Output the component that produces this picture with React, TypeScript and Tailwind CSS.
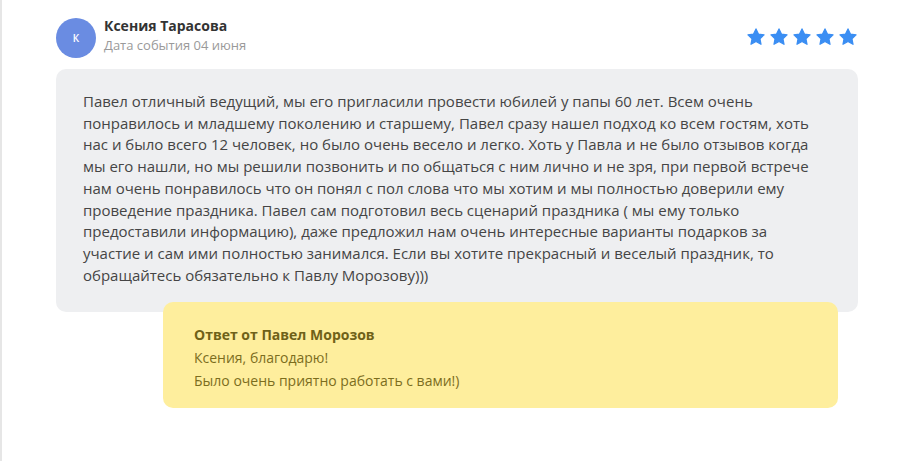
const reviewLines = [
  "Павел отличный ведущий, мы его пригласили провести юбилей у папы 60 лет. Всем очень",
  "понравилось и младшему поколению и старшему, Павел сразу нашел подход ко всем гостям, хоть",
  "нас и было всего 12 человек, но было очень весело и легко. Хоть у Павла и не было отзывов когда",
  "мы его нашли, но мы решили позвонить и по общаться с ним лично и не зря, при первой встрече",
  "нам очень понравилось что он понял с пол слова что мы хотим и мы полностью доверили ему",
  "проведение праздника. Павел сам подготовил весь сценарий праздника ( мы ему только",
  "предоставили информацию), даже предложил нам очень интересные варианты подарков за",
  "участие и сам ими полностью занимался. Если вы хотите прекрасный и веселый праздник, то",
  "обращайтесь обязательно к Павлу Морозову)))",
];

function Star() {
  return (
    <svg width="20" height="18" viewBox="0 0 24 23">
      <path
        d="M12 1.2l3.1 6.6 7.2.9-5.3 5 1.4 7.1L12 17.3l-6.4 3.5 1.4-7.1-5.3-5 7.2-.9z"
        fill="#3b8ef3"
        stroke="#3b8ef3"
        strokeWidth="1.6"
        strokeLinejoin="round"
      />
    </svg>
  );
}

export default function App() {
  return (
    <div className="w-[900px] h-[461px] bg-white border-l-2 border-[#e6e6e6] font-['Open_Sans',sans-serif] overflow-hidden">
      <div className="pl-[54px] pr-[42px] pt-[18px]">
        {/* Header */}
        <div className="flex items-start justify-between">
          <div className="flex items-center gap-[8px]">
            <div className="w-10 h-10 rounded-full bg-[#6a8ce2] flex items-center justify-center text-white text-[10px] font-semibold">
              К
            </div>
            <div className="flex flex-col -mt-[6px]">
              <span className="text-[14px] font-bold text-[#333] leading-[20px]">Ксения Тарасова</span>
              <span className="text-[13px] text-[#9a9a9a] leading-[19px]">Дата события 04 июня</span>
            </div>
          </div>
          <div className="flex gap-[3px] mt-[10px]">
            <Star />
            <Star />
            <Star />
            <Star />
            <Star />
          </div>
        </div>

        {/* Review */}
        <div className="mt-[11px] bg-[#eeeff1] rounded-[10px] pl-[27px] pr-[20px] pt-[22px] pb-[26px]">
          <p className="text-[15px] leading-[21.7px] text-[#454545]">
            {reviewLines.map((l) => (
              <span key={l} className="block whitespace-nowrap">
                {l}
              </span>
            ))}
          </p>
        </div>

        {/* Answer */}
        <div className="ml-[107px] mr-[20px] -mt-[10px] relative bg-[#feee9d] rounded-[10px] pl-[31px] pr-6 pt-[21px] pb-[16px] text-[14px] leading-[23px] text-[#7c6d1e]">
          <p className="font-bold text-[#6f6118]">Ответ от Павел Морозов</p>
          <p>Ксения, благодарю!</p>
          <p>Было очень приятно работать с вами!)</p>
        </div>
      </div>
    </div>
  );
}
